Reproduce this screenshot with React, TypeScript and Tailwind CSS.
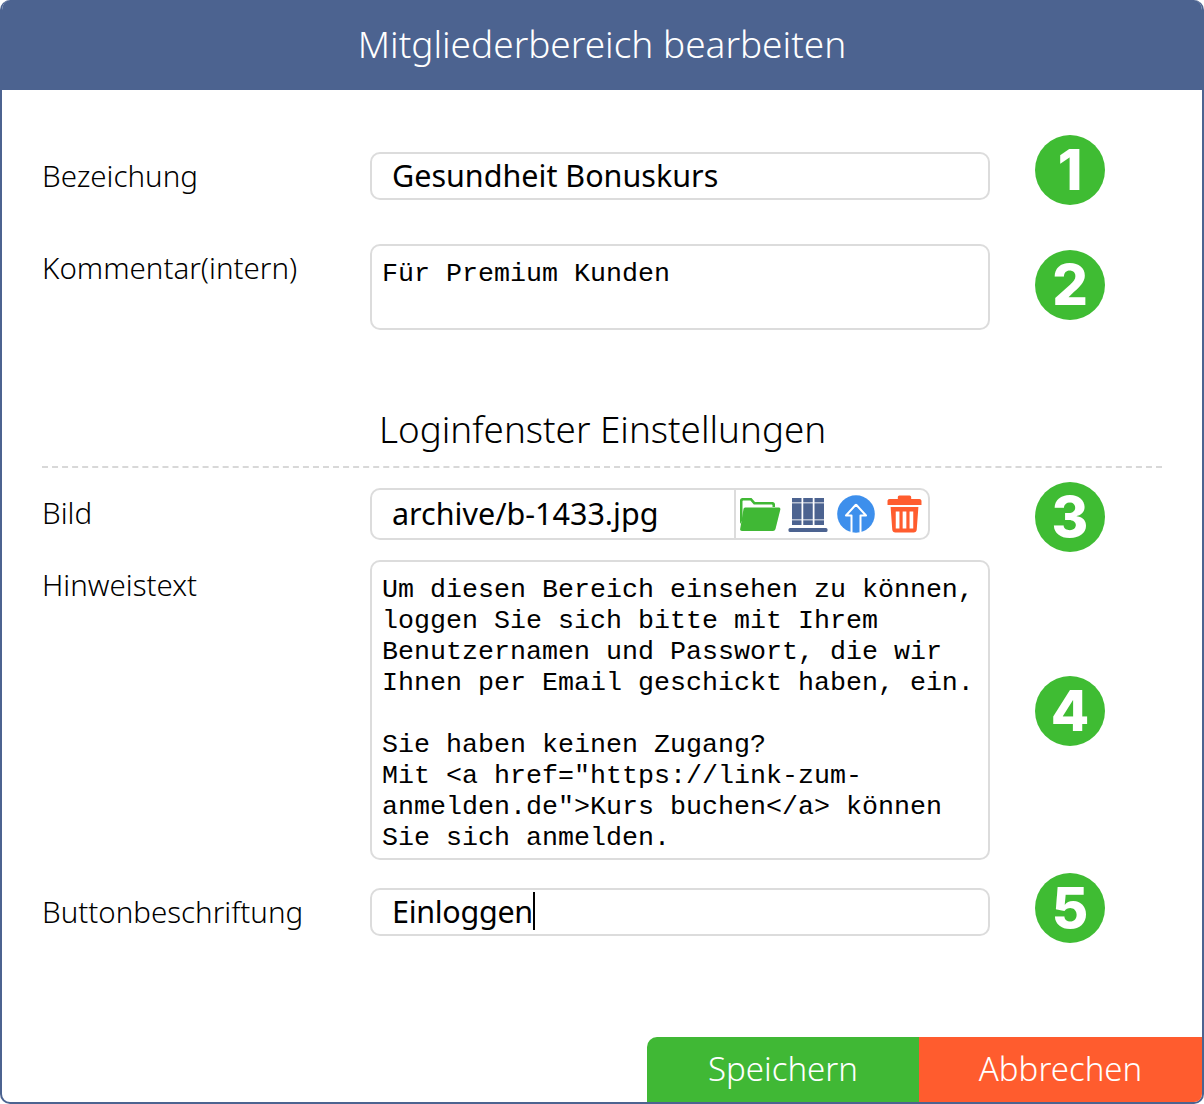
import React from 'react';

const sans = 'font-["Noto_Sans",sans-serif]';

function Badge({ n }: { n: number }) {
  return (
    <div className='flex h-[70px] w-[70px] shrink-0 items-center justify-center rounded-full bg-[#3fbc33] font-["Inter",sans-serif] text-[56px] font-extrabold leading-none text-white'>
      {n}
    </div>
  );
}

function FolderIcon() {
  return (
    <svg width="42" height="36" viewBox="0 0 42 36" className="ml-[3px]">
      <path d="M1 28V4.500C1 3 2 2 3.500 2h9l3.500 4h17.500C35 6 36 7 36 8.500V11h-2.500V9.500c0-.6-.4-1-1-1H14.800l-3.500-4H4.500c-.6 0-1 .4-1 1V24z" fill="#40b835" />
      <path d="M6.500 11.500h33c1.500 0 2.200 1 1.800 2.300L36.500 33c-.4 1.200-1.300 2-2.500 2H3c-1.400 0-2.200-1-1.800-2.300L4.500 13c.3-1 1-1.500 2-1.500z" fill="#40b835" />
    </svg>
  );
}

function BooksIcon() {
  return (
    <svg width="40" height="36" viewBox="0 0 40 36" fill="#4c6390" className="ml-[7px]">
      <rect x="4" y="2" width="9.500" height="27" />
      <rect x="15.250" y="2" width="9.500" height="27" />
      <rect x="26.500" y="2" width="9.500" height="27" />
      <rect x="4" y="6" width="32" height="1.500" fill="#fff" opacity="0.6" />
      <rect x="4" y="23" width="32" height="1.500" fill="#fff" opacity="0.6" />
      <rect x="0.500" y="32" width="39" height="4" rx="1.500" />
    </svg>
  );
}

function UploadIcon() {
  return (
    <svg width="38" height="38" viewBox="0 0 38 38" className="ml-[9px]">
      <circle cx="19" cy="19" r="18.800" fill="#3d8fec" />
      <path d="M19 9.500 29 20.500h-5.500V37.500M19 9.500 9 20.500h5.500V37.500" fill="none" stroke="#fff" strokeWidth="2" strokeLinejoin="round" />
    </svg>
  );
}

function TrashIcon() {
  return (
    <svg width="35" height="38" viewBox="0 0 34 38" fill="#ff5c2e" className="ml-[12px]" preserveAspectRatio="none">
      <path d="M12 .5h10a1.500 1.500 0 0 1 1.500 1.500V4h8c1.200 0 2 .8 2 2v4H.5V6c0-1.200.8-2 2-2h8V2A1.500 1.500 0 0 1 12 .5z" />
      <path d="M3.500 12h27l-1.600 22.500c-.1 1.800-1.300 3-3 3H8.100c-1.700 0-2.900-1.200-3-3zM8.500 16.500v17h3.600v-17zm6.700 0v17h3.600v-17zm6.700 0v17h3.600v-17z" fillRule="evenodd" />
    </svg>
  );
}

export default function App() {
  const fieldText = `${sans} text-[30.5px] leading-none text-black`;
  const label = `${sans} w-[368px] shrink-0 pl-[40px] text-[29.5px] font-light leading-none text-black`;
  const box = 'border-2 border-[#dcdcdc] bg-white';
  const area = `${box} block w-[620px] shrink-0 resize-none overflow-hidden rounded-[10px] px-[10px] font-["Liberation_Mono",monospace] text-[26.67px] leading-[31px] text-black outline-none`;

  return (
    <div className="flex h-[1104px] w-[1204px] flex-col overflow-hidden rounded-[10px] border-2 border-t-0 border-[#4c6390] bg-white">
      <div className={`${sans} -mx-[2px] flex h-[90px] shrink-0 items-center justify-center bg-[#4c6390] pb-[2px] text-[37px] font-light text-white`}>
        Mitgliederbereich bearbeiten
      </div>

      <div className="flex items-start pt-[45px]">
        <div className={`${label} pt-[26px]`}>Bezeichung</div>
        <div className={`${box} mt-[17px] flex h-[48px] w-[620px] shrink-0 items-center rounded-[10px] px-[20px] pb-[2px] ${fieldText}`}>Gesundheit Bonuskurs</div>
        <div className="ml-[45px]"><Badge n={1} /></div>
      </div>

      <div className="flex items-start pt-[39px]">
        <div className={`${label} pt-[9px]`}>Kommentar(intern)</div>
        <textarea readOnly className={`${area} h-[86px] pt-[13px]`} defaultValue="Für Premium Kunden" />
        <div className="ml-[45px] mt-[6px]"><Badge n={2} /></div>
      </div>

      <div className={`${sans} mt-[77px] pl-[377px] text-[36.8px] font-light leading-[44px] text-black`}>Loginfenster Einstellungen</div>
      <div className="ml-[40px] mr-[40px] mt-[15px] border-t-2 border-dashed border-[#d8d8d8]" />

      <div className="flex items-start pt-[14px]">
        <div className={`${label} pt-[16px]`}>Bild</div>
        <div className={`${box} mt-[6px] flex h-[52px] w-[560px] shrink-0 items-center overflow-hidden rounded-[10px]`}>
          <div className={`flex h-full w-[364px] shrink-0 items-center border-r-2 border-[#dcdcdc] pb-[2px] pl-[20px] ${fieldText}`}>archive/b-1433.jpg</div>
          <div className="flex items-center">
            <FolderIcon />
            <BooksIcon />
            <UploadIcon />
            <TrashIcon />
          </div>
        </div>
        <div className="ml-[105px]"><Badge n={3} /></div>
      </div>

      <div className="flex items-start pt-[8px]">
        <div className={`${label} pt-[10px]`}>Hinweistext</div>
        <textarea
          readOnly
          className={`${area} h-[300px] pt-[13px]`}
          defaultValue={'Um diesen Bereich einsehen zu können, loggen Sie sich bitte mit Ihrem Benutzernamen und Passwort, die wir Ihnen per Email geschickt haben, ein.\n\nSie haben keinen Zugang?\nMit <a href="https://link-zum-anmelden.de">Kurs buchen</a> können Sie sich anmelden.'}
        />
        <div className="ml-[45px] mt-[116px]"><Badge n={4} /></div>
      </div>

      <div className="flex items-start pt-[13px]">
        <div className={`${label} pt-[24px]`}>Buttonbeschriftung</div>
        <div className={`${box} mt-[15px] flex h-[48px] w-[620px] shrink-0 items-center rounded-[10px] px-[20px] pb-[2px] ${fieldText}`}>
          <span className="tracking-[-0.3px]">Einloggen</span>
          <span className="h-[38px] w-[2px] bg-black" />
        </div>
        <div className="ml-[45px]"><Badge n={5} /></div>
      </div>

      <div className={`${sans} mt-auto flex justify-end text-[33px] font-light text-white`}>
        <div className="flex h-[65px] w-[272px] items-center justify-center rounded-tl-[10px] bg-[#40b835] pb-[2px]">Speichern</div>
        <div className="flex h-[65px] w-[283px] items-center justify-center bg-[#ff5c2e] pb-[2px]">Abbrechen</div>
      </div>
    </div>
  );
}
